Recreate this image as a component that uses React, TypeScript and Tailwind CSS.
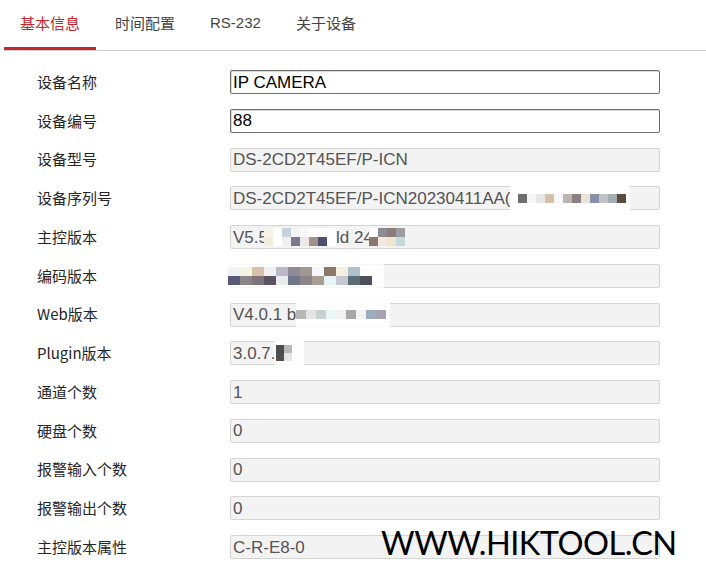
import React from "react";

type Cell = string;

// blurred / pixelated patch used to hide serial-ish values
function Mosaic({
  rows,
  w = 9,
  h = 9,
  className = "",
}: {
  rows: Cell[][];
  w?: number;
  h?: number;
  className?: string;
}) {
  return (
    <span className={`inline-flex flex-col ${className}`}>
      {rows.map((r, i) => (
        <span key={i} className="flex">
          {r.map((c, j) => (
            <span key={j} style={{ width: w, height: h, background: c }} />
          ))}
        </span>
      ))}
    </span>
  );
}

const labelFont = { fontFamily: '"Noto Sans CJK SC", "Noto Sans", sans-serif' };
const valueFont = { fontFamily: '"Liberation Sans", Arial, sans-serif' };

function Field({ editable, children }: { editable?: boolean; children: React.ReactNode }) {
  return (
    <div
      className={
        editable
          ? "flex h-6 w-[430px] items-center overflow-visible rounded-[2px] border border-[#6e6e6e] bg-white pl-[2px] text-[17px] text-black shadow-[inset_1px_1px_0_#d8d8d8]"
          : "flex h-6 w-[430px] items-center overflow-visible rounded-[2px] border border-[#d4d4d4] bg-[#f3f3f3] pl-[2px] text-[17px] text-[#545454]"
      }
      style={valueFont}
    >
      <span className="flex items-center whitespace-nowrap leading-none">{children}</span>
    </div>
  );
}

const tabs = ["基本信息", "时间配置", "RS-232", "关于设备"];

export default function App() {
  const rows: { label: string; editable?: boolean; value: React.ReactNode }[] = [
    { label: "设备名称", editable: true, value: "IP CAMERA" },
    { label: "设备编号", editable: true, value: "88" },
    { label: "设备型号", value: "DS-2CD2T45EF/P-ICN" },
    {
      label: "设备序列号",
      value: (
        <>
          DS-2CD2T45EF/P-ICN20230411AA(
          <span className="-my-2 flex h-7 items-center bg-white/95 pl-2 pr-1">
            <Mosaic
              rows={[["#6e6e6e", "#f6f6f6", "#e6e6e6", "#d6c2aa", "#f8f8f8", "#bcb4b0", "#8a8080", "#ece4d8", "#8890a8", "#c0c2c8", "#a4acb6", "#5c4c40"]]}
            />
          </span>
        </>
      ),
    },
    {
      label: "主控版本",
      value: (
        <>
          V5.5
          <Mosaic
            className="-ml-1"
            rows={[
              ["#f6f2e8", "#ffffff", "#c8d2dc", "#f4f4f4", "#f8f8f8", "#ffffff", "#ffffff", "#ffffff"],
              ["#f3ecdc", "#ffffff", "#f0f0f0", "#7c7890", "#ece8e8", "#a09488", "#4c5070", "#ffffff"],
            ]}
          />
          ld 24
          <Mosaic
            className="-ml-1"
            rows={[
              ["#ffffff", "#8c8c94", "#8a7c78", "#9c9ca0"],
              ["#8a7870", "#f6e8de", "#efe6cc", "#c4d8e0"],
            ]}
          />
        </>
      ),
    },
    {
      label: "编码版本",
      value: (
        <span className="-ml-[5px] flex h-8 items-center bg-white/80 pr-3">
          <Mosaic
            w={12}
            rows={[
              ["#f2f2f2", "#f6f2e4", "#d6c0a8", "#f0f0f0", "#bcb8c8", "#8e8a98", "#a09890", "#f4f8f8", "#8c7868", "#f4f0dc", "#b0c0d0", "#ffffff"],
              ["#5c5878", "#888488", "#7c7478", "#5e5262", "#e8ecec", "#6e7888", "#8c8488", "#a89c94", "#e8f4f4", "#c4c8d0", "#5c6c74", "#4c5058"],
            ]}
          />
        </span>
      ),
    },
    {
      label: "Web版本",
      value: (
        <>
          V4.0.1 b
          <span className="-my-2 flex h-7 items-center bg-white/90 pr-1">
            <Mosaic
              w={10}
              rows={[["#b6b6b6", "#e4e4e4", "#c8d0d0", "#e8f6f6", "#f2f2f2", "#a8a8a8", "#f2f2f2", "#9cacbc", "#a4a4b4"]]}
            />
          </span>
        </>
      ),
    },
    {
      label: "Plugin版本",
      value: (
        <>
          3.0.7.
          <span className="relative flex items-center">
            <span className="absolute -top-2 left-[-2px] h-9 w-[30px] bg-white/90" />
            <Mosaic className="relative" w={8} h={8} rows={[["#4c4c4c", "#b8b8b8"], ["#505050", "#e6e6e6"]]} />
          </span>
        </>
      ),
    },
    { label: "通道个数", value: "1" },
    { label: "硬盘个数", value: "0" },
    { label: "报警输入个数", value: "0" },
    { label: "报警输出个数", value: "0" },
    { label: "主控版本属性", value: "C-R-E8-0" },
  ];

  return (
    <div className="relative h-[588px] w-[706px] overflow-hidden bg-white">
      <div className="ml-1 flex h-[51px] border-b border-[#cfcfcf]" style={labelFont}>
        {tabs.map((t, i) => (
          <div
            key={t}
            className={
              i === 0
                ? "mr-[3px] flex items-center border-b-[3px] border-[#c1272d] px-4 text-[15px] text-[#c1272d]"
                : "mr-[3px] flex items-center border-b-[3px] border-transparent px-4 text-[15px] text-[#444]"
            }
            style={t === "RS-232" ? valueFont : undefined}
          >
            {t}
          </div>
        ))}
      </div>

      <div className="flex flex-col gap-[14.75px] pt-[19px]">
        {rows.map((r) => (
          <div key={r.label} className="flex items-center">
            <div className="w-[230px] pl-[37px] text-[15px] text-[#262626]" style={labelFont}>
              {r.label}
            </div>
            <Field editable={r.editable}>{r.value}</Field>
          </div>
        ))}
      </div>

      <div
        className="absolute left-[381px] top-[527px] text-[32.5px] leading-none tracking-[-0.5px] text-black"
        style={{ fontFamily: 'Lato, "Liberation Sans", sans-serif' }}
      >
        WWW.HIKTOOL.CN
      </div>
    </div>
  );
}
